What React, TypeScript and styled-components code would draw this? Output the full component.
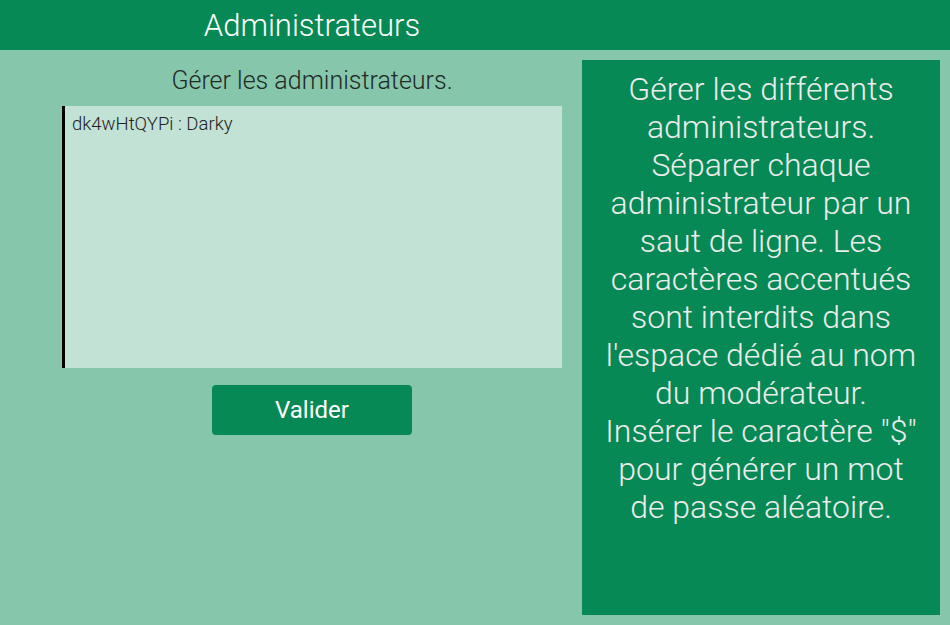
import React from 'react';
import styled, {createGlobalStyle} from "styled-components";

const GlobalStyle = createGlobalStyle`
    html, body {
        margin: 0;
        padding: 0;
        background: #86c6ab;
        font-family: Roboto, "Noto Sans", sans-serif;
    }
`;

const Page = styled.div`
    display: flex;
    flex-direction: column;
    width: 950px;
    height: 625px;
    background: #86c6ab;
`;

const Header = styled.header`
    display: flex;
    align-items: center;
    height: 50px;
    background: #078955;
    padding-left: 62px;
    box-sizing: border-box;
`;

const Title = styled.h1`
    width: 500px;
    margin: 0;
    text-align: center;
    font-size: 31px;
    font-weight: 300;
    color: #ffffff;
`;

const Main = styled.main`
    display: flex;
    flex: 1;
`;

const LeftColumn = styled.section`
    display: flex;
    flex-direction: column;
    align-items: center;
    width: 500px;
    padding: 0 20px 0 62px;
`;

const SubTitle = styled.p`
    margin: 16px 0 10px;
    font-size: 25px;
    line-height: 30px;
    font-weight: 300;
    color: #1f2a25;
`;

const AdminArea = styled.textarea`
    width: 500px;
    height: 262px;
    box-sizing: border-box;
    padding: 7px 7px;
    border: none;
    border-left: 3px solid #000;
    background: #c2e2d5;
    font-family: Roboto, sans-serif;
    font-size: 18.5px;
    font-weight: 300;
    color: #222;
    resize: none;
    outline: none;
`;

const Button = styled.button`
    width: 200px;
    height: 50px;
    margin-top: 17px;
    border: none;
    border-radius: 4px;
    background: #078955;
    color: #fff;
    font-family: Roboto, sans-serif;
    font-size: 24px;
    font-weight: 400;
    cursor: pointer;
`;

const HelpPanel = styled.aside`
    width: 358px;
    height: 555px;
    margin-top: 10px;
    box-sizing: border-box;
    padding: 10px 8px 0;
    background: #078955;
    color: #ececec;
    font-size: 32px;
    font-weight: 300;
    line-height: 38px;
    text-align: center;
`;

const HelpLine = styled.span`
    display: block;
    white-space: nowrap;
`;

const helpLines = [
    "Gérer les différents",
    "administrateurs.",
    "Séparer chaque",
    "administrateur par un",
    "saut de ligne. Les",
    "caractères accentués",
    "sont interdits dans",
    "l'espace dédié au nom",
    "du modérateur.",
    "Insérer le caractère \"$\"",
    "pour générer un mot",
    "de passe aléatoire.",
];

function App() {
    return (
        <Page>
            <GlobalStyle/>
            <Header>
                <Title>Administrateurs</Title>
            </Header>
            <Main>
                <LeftColumn>
                    <SubTitle>Gérer les administrateurs.</SubTitle>
                    <AdminArea defaultValue="dk4wHtQYPi : Darky" spellCheck={false}/>
                    <Button>Valider</Button>
                </LeftColumn>
                <HelpPanel>
                    {helpLines.map((line) => (
                        <HelpLine key={line}>{line}</HelpLine>
                    ))}
                </HelpPanel>
            </Main>
        </Page>
    );
}

export default App;
